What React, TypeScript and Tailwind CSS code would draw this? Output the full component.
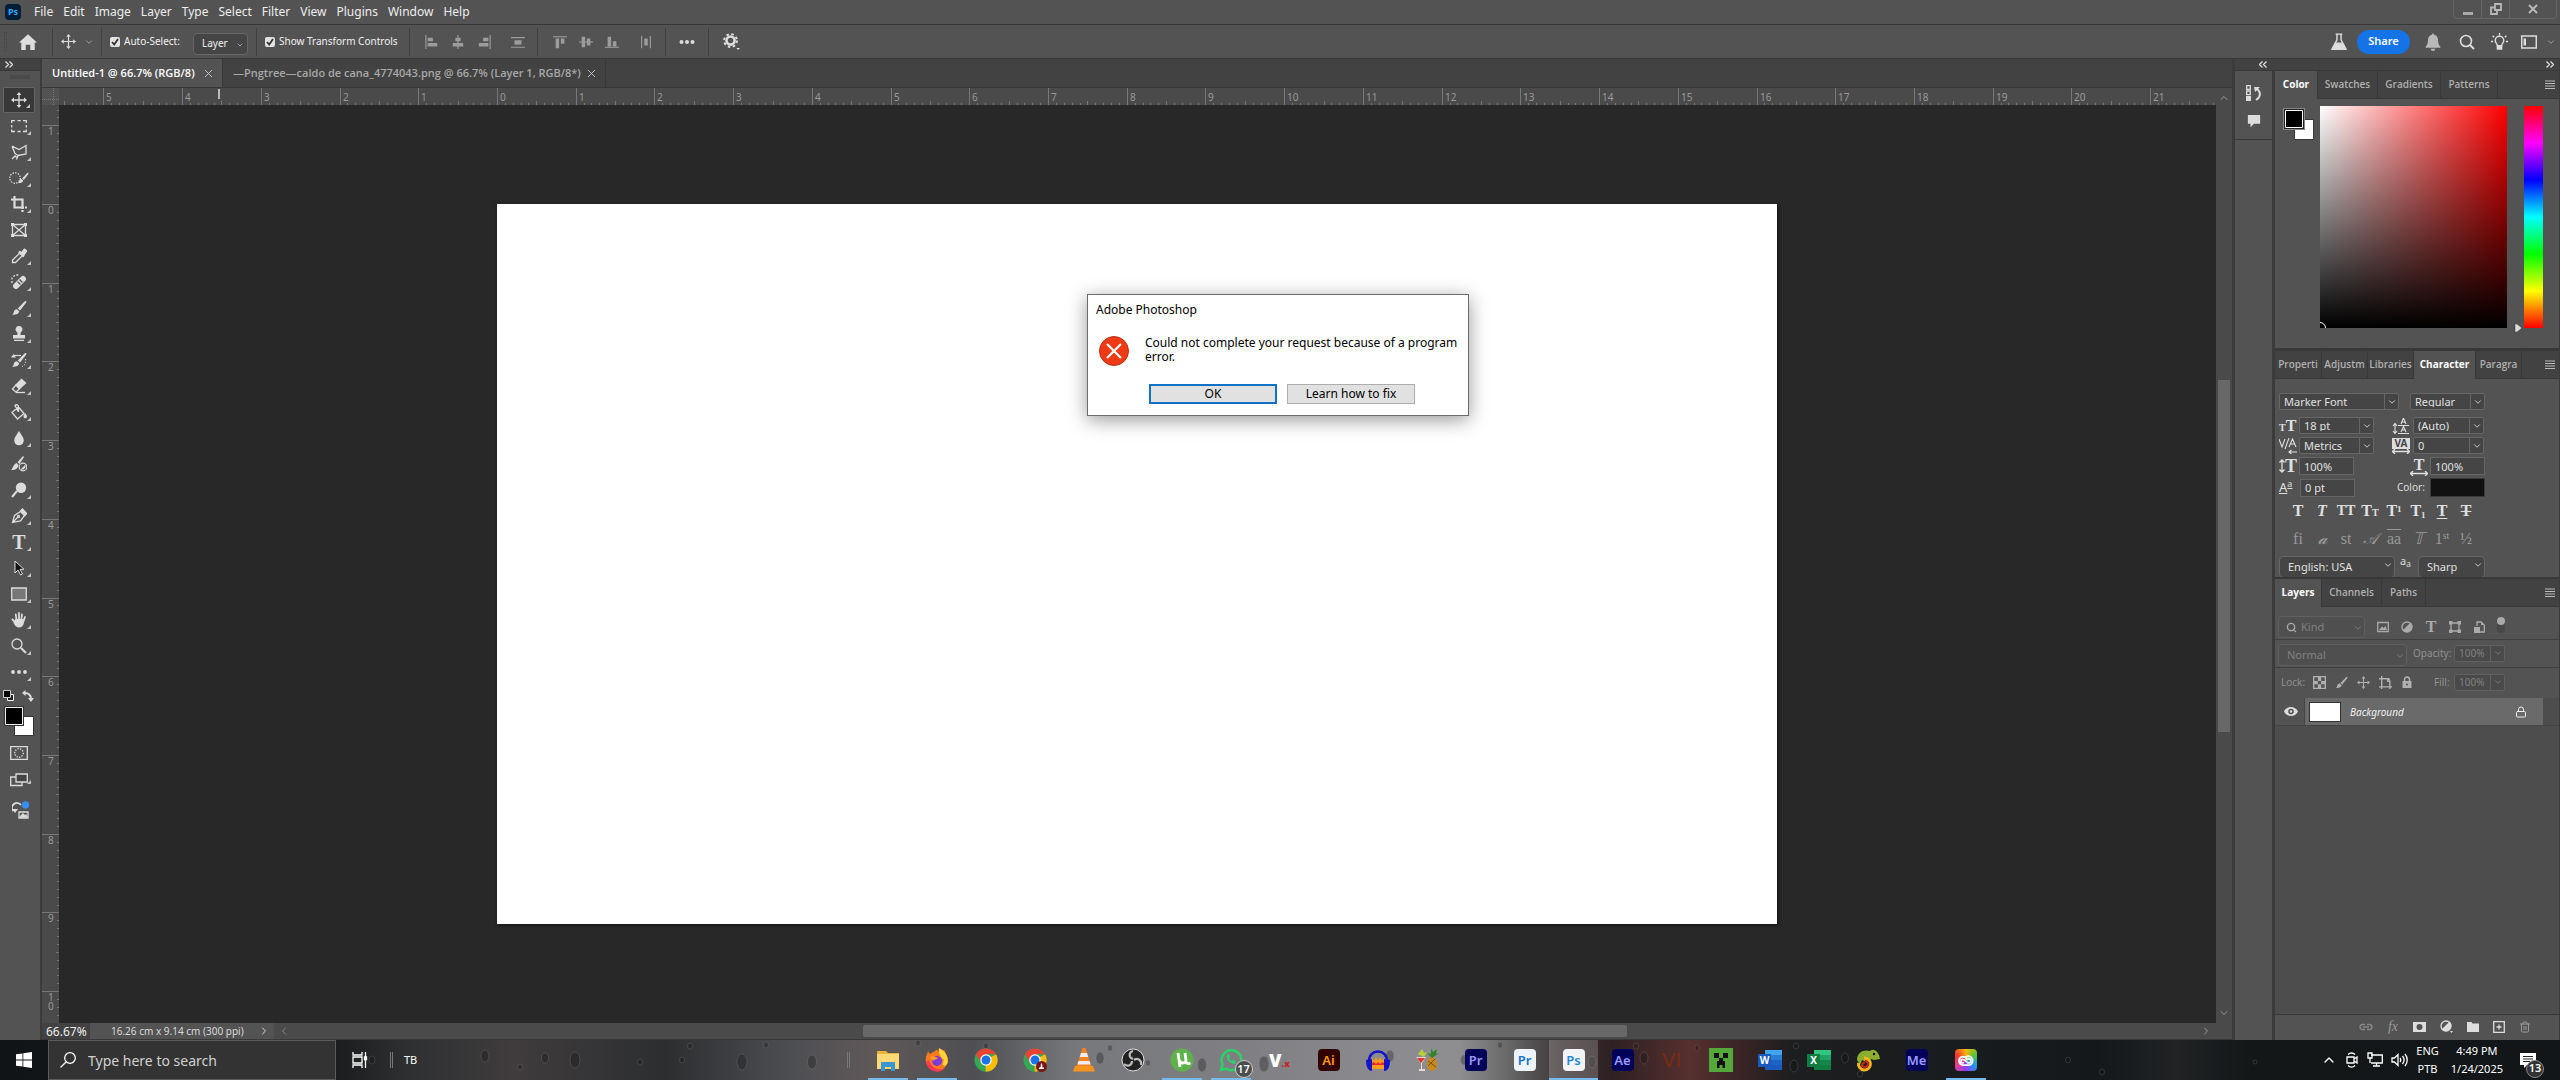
import React from 'react';
import { ChevronDown, ChevronUp, ChevronLeft, ChevronRight, Lock, Search, Trash2 } from 'lucide-react';

const CM = 1280 / 16.26;

type SvgProps = { children: React.ReactNode; className?: string; box?: string };

// outlined icon
const Line: React.FC<SvgProps> = ({ children, className = 'size-4', box = '0 0 16 16' }) => (
  <svg className={className} viewBox={box} fill="none" stroke="currentColor" strokeWidth="1.3" aria-hidden="true">
    {children}
  </svg>
);

// filled icon
const Solid: React.FC<SvgProps> = ({ children, className = 'size-4', box = '0 0 16 16' }) => (
  <svg className={className} viewBox={box} fill="currentColor" aria-hidden="true">
    {children}
  </svg>
);

const MoveIcon = ({ className = 'size-4' }: { className?: string }) => (
  <Line className={className}>
    <path d="M8 2v12M2 8h12" />
    <path d="M8 0l2.4 3H5.6zM8 16l2.4-3H5.6zM0 8l3-2.4v4.8zM16 8l-3-2.4v4.8z" fill="currentColor" stroke="none" />
  </Line>
);

const BrushShape = () => (
  <>
    <path d="M15 1c.6.4.4 1.200-.1 2L9 10.500 6.800 8.500 13 2c.7-.8 1.400-1.300 2-1z" />
    <path d="M6 9.200l2.200 2C8 13.800 5 15 1 14.700c1.800-1 1.600-2.200 2-3.500.4-1.300 1.600-2 3-2z" />
  </>
);

const TypeGlyph = ({ className = 'text-base' }: { className?: string }) => (
  <span className={`font-['Liberation_Serif',serif] leading-none font-bold ${className}`}>T</span>
);

const tools = [
  { name: 'Move', icon: <MoveIcon /> },
  { name: 'Rectangular Marquee', icon: <Line><path d="M.7 5V2.700H4M6.500 2.700h3.200M12 2.700h3.300V5M15.300 7v2.500M15.300 11.500v2H12M9.700 13.500H6.500M4 13.500H.7v-2M.7 9.500V7" /></Line> },
  { name: 'Polygonal Lasso', icon: <Line><path d="M1 2.200L8 5.500l7-4v8.500l-8 1.500M1 2.200l3 7.300M4 9.500l3 2c0 2.200-3 2-2.500 0M4.500 11.500L1 15M7 11.500l-1.500 4" /></Line> },
  { name: 'Quick Selection', icon: <><Line className="size-3"><circle cx="8" cy="8" r="7" strokeWidth="1.800" strokeDasharray="1.800 1.800" /></Line><Solid className="-ml-1 size-3"><BrushShape /></Solid></> },
  { name: 'Crop', icon: <Line><path d="M3.500 0v11.500H13M0 3.500h11.500V13M11.500 14v2M14 11.500h2" strokeWidth="2.200" /></Line> },
  { name: 'Frame', icon: <Line><path d="M1.500 2.500h13v11h-13zM1.500 2.500l13 11M14.500 2.500l-13 11" /><path d="M0 1h3v3H0zM13 1h3v3h-3zM0 12h3v3H0zM13 12h3v3h-3z" fill="currentColor" stroke="none" /></Line>, plain: true },
  { name: 'Eyedropper', icon: <Line><path d="M9 5l2.500 2.500-7 7H1.500V12z" /><path d="M8 3.500l5 5M10.500 5.500l3-3.500 1.500 1-2.500 3.500z" strokeWidth="2.500" fill="currentColor" /></Line> },
  { name: 'Spot Healing', icon: <Line><path d="M1 9V4l3-3h4" strokeDasharray="2 1.500" /><path d="M5 12L12 5" strokeWidth="6" strokeLinecap="round" /><path d="M6.500 7.500l3 3M8.500 5.500l3 3" stroke="#535353" /></Line> },
  { name: 'Brush', icon: <Solid><BrushShape /></Solid> },
  { name: 'Clone Stamp', icon: <Solid><path d="M8 0a3.300 3.300 0 0 1 2 6c-.7.8-.6 2-.3 3H14v3.500H2V9h4.300c.3-1 .4-2.200-.3-3a3.300 3.300 0 0 1 2-6zM3 13.700h10V15H3z" /></Solid> },
  { name: 'History Brush', icon: <Solid><BrushShape /><path d="M0 5.500L2.500 2 5 5.500z" /><path d="M3 3.500h7" stroke="currentColor" strokeWidth="1.200" /><path d="M14.500 7v5l-4 3" fill="none" stroke="currentColor" strokeDasharray="1.200 1.500" /></Solid> },
  { name: 'Eraser', icon: <Line><path d="M1.500 11l3.500 3.200 3.500-3.500L5 7z" /><path d="M5 7l5.500-5.500L14.500 5l-6 5.700z" fill="currentColor" /><path d="M5 14.500h9" /></Line> },
  { name: 'Paint Bucket', icon: <Line><path d="M1 8.500L7.500 3 13 9.500 6.500 15zM7.500 8L4 1.500C5.500 0 7.500 1 7.500 3v5" /><path d="M14.200 9c1 1.500 1.800 2.500 1.800 3.500 0 2.400-3.500 2.400-3.500 0 0-1 .8-2 1.700-3.500z" fill="currentColor" stroke="none" /></Line> },
  { name: 'Blur', icon: <Solid><path d="M8 1c2.500 4 4.800 6.500 4.800 9.500a4.800 4.800 0 0 1-9.600 0C3.200 7.500 5.500 5 8 1z" /></Solid> },
  { name: 'Mixer Brush', icon: <Solid><path d="M12 0l1 1-4.500 7-2-1.800zM5.500 7l2 2c-.5 4-3.500 5.500-7.500 5 2-1.500 2-5.500 5.500-7z" /><circle cx="12" cy="11" r="3.800" fill="none" stroke="currentColor" strokeWidth="1.200" /><path d="M9.500 13.500l5-5a4 4 0 0 1-5 5z" /></Solid>, plain: true },
  { name: 'Dodge', icon: <Solid><circle cx="10" cy="5.800" r="5.200" /><path d="M6 9L1 15" stroke="currentColor" strokeWidth="2" /></Solid> },
  { name: 'Pen', icon: <Line><path d="M1.500 14.500l2-7 6-4 4 4-4 5.500zM1.500 14.500L7 9" /><circle cx="7.500" cy="8.500" r="1" /><path d="M9.500 3l4.500 4.500 1.500-2L11.500 1z" fill="currentColor" /></Line> },
  { name: 'Type', icon: <TypeGlyph className="text-xl" /> },
  { name: 'Path Selection', icon: <svg className="size-4" viewBox="0 0 16 16" aria-hidden="true"><path d="M4 1v12l3-3 2.500 5 2-1L9 9.300h4z" fill="#111" stroke="#ddd" /></svg> },
  { name: 'Rectangle', icon: <Line><path d="M.7 2h14.600v12H.7z" fill="#777" /></Line> },
  { name: 'Hand', icon: <Solid><path d="M5.500 8L4.800 2.500M8 8V1M10.300 8l.6-5.500M12.500 9L14 5M5 11L1.500 7.500" stroke="currentColor" strokeWidth="1.800" strokeLinecap="round" /><path d="M4.500 7h8.800c0 4-1 8.500-5 8.500-3 0-4.500-2-6-5z" /></Solid> },
  { name: 'Zoom', icon: <Line><circle cx="6" cy="6" r="5" /><path d="M10 10l5 5" strokeWidth="2" /></Line> },
  { name: 'Edit Toolbar', icon: <Solid><circle cx="2" cy="8" r="1.900" /><circle cx="8" cy="8" r="1.900" /><circle cx="14" cy="8" r="1.900" /></Solid> },
];

const Corner = () => (
  <svg className="absolute right-1 bottom-1 size-1" viewBox="0 0 4 4" aria-hidden="true">
    <path d="M4 0v4H0z" fill="#c4c4c4" />
  </svg>
);

const Divider = () => <div className="h-7 w-px shrink-0 bg-[#404040]" />;

const menus = ['File', 'Edit', 'Image', 'Layer', 'Type', 'Select', 'Filter', 'View', 'Plugins', 'Window', 'Help'];

const MenuBar = () => (
  <header className="flex h-[25px] shrink-0 items-center border-b border-[#383838] bg-[#535353] pl-[5px]">
    <div className="mr-2 flex size-4 items-center justify-center rounded-sm bg-[#001e36] text-[9px] font-bold text-[#31a8ff]">Ps</div>
    <nav className="flex h-full">
      {menus.map((m) => (
        <button key={m} className="px-[5px] text-xs text-[#eee]">{m}</button>
      ))}
    </nav>
    <div className="mr-[3px] ml-auto flex h-[19px] self-start rounded-b-sm border border-t-0 border-[#656565] text-[#b8b8b8]">
      <button aria-label="Minimize" className="flex w-7 items-center justify-center border-r border-[#656565]">
        <span className="mt-2 h-[3px] w-[10px] bg-[#aaa]" />
      </button>
      <button aria-label="Restore" className="flex w-7 items-center justify-center border-r border-[#656565]">
        <Line className="size-3" box="0 0 12 12"><path d="M5 1h6v6H5zM5 4.500H1V11h6V7" strokeWidth="1.800" /></Line>
      </button>
      <button aria-label="Close" className="flex w-[46px] items-center justify-center">
        <Line className="size-[10px]" box="0 0 10 10"><path d="M1 1l8 8M9 1L1 9" strokeWidth="2" /></Line>
      </button>
    </div>
  </header>
);

const Check = ({ id, label, width }: { id: string; label: string; width: string }) => (
  <div className={`flex items-center gap-1 text-[10px] whitespace-nowrap text-[#f0f0f0] ${width}`}>
    <span className="relative flex">
      <input id={id} type="checkbox" defaultChecked className="size-[10px] appearance-none rounded-xs bg-[#e2e2e2]" />
      <Line className="pointer-events-none absolute inset-0 size-[10px] text-[#333]" box="0 0 10 10"><path d="M2 5l2.200 2.500L8 2" strokeWidth="1.800" /></Line>
    </span>
    <label htmlFor={id}>{label}</label>
  </div>
);

const alignIcons = [
  ['M1 0v16', 'M3 3h6v4H3zM3 9h11v4H3z'],
  ['M8 0v16', 'M5 3h6v4H5zM2 9h12v4H2z'],
  ['M15 0v16', 'M7 3h6v4H7zM2 9h11v4H2z'],
  ['M0 3h16M0 14h16', 'M4 6h8v5H4z'],
];
const alignIcons2 = [
  ['M0 2h16', 'M3 4h4v11H3zM9 4h4v6H9z'],
  ['M0 8h16', 'M3 2h4v12H3zM9 4h4v8H9z'],
  ['M0 14h16', 'M3 2h4v11H3zM9 7h4v6H9z'],
  ['M3 1v14M13 1v14', 'M6 4h4v8H6z'],
];

const AlignGroup = ({ items }: { items: string[][] }) => (
  <div className="flex items-center gap-3 text-[#9c9c9c]">
    {items.map(([l, f], i) => (
      <button key={l} aria-label="Align" className={i === 3 ? 'ml-2' : ''}>
        <Solid className="size-[14px]"><path d={f} /><path d={l} stroke="currentColor" strokeWidth="1.300" /></Solid>
      </button>
    ))}
  </div>
);

const OptionsBar = () => (
  <div className="flex h-[34px] shrink-0 items-center border-b border-[#383838] bg-[#535353] text-[#ddd]">
    <div className="ml-1 h-5 w-[3px] border-x border-dotted border-[#444]" />
    <button aria-label="Home" className="mr-[15px] ml-3">
      <Solid className="size-[18px]"><path d="M8 1l8 7.500h-2V15h-4v-4.500H6V15H2V8.500H0z" /></Solid>
    </button>
    <Divider />
    <button aria-label="Move tool" className="mr-[7px] ml-2 flex items-center gap-2"><MoveIcon className="size-[15px]" /><ChevronDown className="size-[10px] text-[#aaa]" /></button>
    <Divider />
    <div className="ml-2"><Check id="auto" label="Auto-Select:" width="w-[83px]" /></div>
    <div className="relative mt-1 mr-2 w-[55px] text-[10px]">
      <select aria-label="Auto-select target" className="h-[22px] w-full appearance-none rounded-sm border border-[#666] bg-[#454545] pl-2 text-[#f0f0f0]"><option>Layer</option></select>
      <ChevronDown className="pointer-events-none absolute top-2 right-1 size-2 text-[#ccc]" />
    </div>
    <Divider />
    <div className="ml-2"><Check id="transform" label="Show Transform Controls" width="w-36" /></div>
    <Divider />
    <div className="mr-3 ml-[15px]"><AlignGroup items={alignIcons} /></div>
    <Divider />
    <div className="mr-3 ml-[15px]"><AlignGroup items={alignIcons2} /></div>
    <Divider />
    <button aria-label="More options" className="mx-[13px]">
      <Solid className="size-4"><circle cx="2.500" cy="8" r="2" /><circle cx="8" cy="8" r="2" /><circle cx="13.500" cy="8" r="2" /></Solid>
    </button>
    <Divider />
    <button aria-label="Settings" className="ml-[14px]">
      <Line className="size-[17px]" box="0 0 18 18">
        <circle cx="8" cy="8" r="4.300" strokeWidth="2.800" />
        <circle cx="8" cy="8" r="6.800" strokeWidth="2" strokeDasharray="2.700 2.640" />
        <path d="M14 16h4l-2 2z" fill="currentColor" stroke="none" />
      </Line>
    </button>
    <div className="mr-1 ml-auto flex items-center">
      <button aria-label="Beta"><Line className="size-[18px]"><path d="M5 1h6M6.200 1v5L2 14h12L9.800 6V1" /><path d="M5 9h6l3 5.500H2z" fill="currentColor" /></Line></button>
      <button className="ml-[9px] h-6 w-[53px] rounded-full bg-[#1473e6] text-[11px] font-semibold text-white">Share</button>
      <button aria-label="Notifications" className="ml-[14px] text-[#b9b9b9]"><Solid className="size-[18px]"><path d="M7 1.500a1 1 0 0 1 2 0c2.500.5 3.500 2.500 3.500 5 0 3 .8 4.500 2 5.500v1h-13v-1c1.200-1 2-2.500 2-5.500 0-2.500 1-4.500 3.500-5zM6 14h4a2 2 0 0 1-4 0z" /></Solid></button>
      <button aria-label="Search" className="ml-[17px]"><Line><circle cx="7" cy="7" r="5.500" strokeWidth="1.600" /><path d="M11 11l4 4" strokeWidth="2" /></Line></button>
      <button aria-label="Discover" className="ml-4"><Line className="size-[17px]"><path d="M6 12c0-2-2-2.500-2-5a4 4 0 0 1 8 0c0 2.500-2 3-2 5zM8 0v2M1.500 2.500L3 4M14.500 2.500L13 4M0 8h2M14 8h2" /><path d="M6 12h4v3H6z" fill="currentColor" /></Line></button>
      <button aria-label="Workspace" className="ml-[13px] flex items-center gap-[9px]">
        <Line><path d="M.7 2h14.600v12H.7z" strokeWidth="1.500" /><path d="M2.500 4.500H5v7H2.500z" fill="currentColor" stroke="none" /></Line>
        <ChevronDown className="size-[10px] text-[#aaa]" />
      </button>
    </div>
  </div>
);

const DoubleArrow = ({ left }: { left?: boolean }) => (
  <Line className="h-[7px] w-2 text-[#ddd]" box="0 0 8 7"><path d={left ? 'M3.500.5l-3 3 3 3M7.500.5l-3 3 3 3' : 'M.5.5l3 3-3 3M4.500.5l3 3-3 3'} /></Line>
);

const Toolbar = () => (
  <aside className="flex w-[42px] shrink-0 flex-col border-r-2 border-[#3b3b3b] bg-[#535353] text-[#dcdcdc]">
    <div className="flex h-3 shrink-0 items-center border-b border-[#383838] bg-[#424242] pl-[5px]"><DoubleArrow /></div>
    <div className="mx-[10px] mt-1 mb-2 h-1 shrink-0 border-x border-dotted border-[#444] bg-[#4a4a4a]" />
    <div className="flex flex-col pl-[3px]">
      {tools.map((t, i) => (
        <button
          key={t.name}
          aria-label={t.name}
          className={`relative flex h-[26px] w-8 items-center justify-center rounded-xs ${i === 0 ? 'border border-[#666] bg-[#383838]' : ''}`}
        >
          {t.icon}
          {!t.plain && <Corner />}
        </button>
      ))}
    </div>
    <div className="mt-[5px] ml-[3px] flex h-3 items-center justify-between pr-[6px]">
      <svg className="size-3" viewBox="0 0 12 12" aria-hidden="true"><path d="M4.500 4.500h6v6h-6z" fill="#222" stroke="#fff" /><path d="M.5.5h7v7h-7z" fill="#000" stroke="#ccc" /></svg>
      <Line className="size-3" box="0 0 12 12"><path d="M2 3c4-.5 7 2 7 6" strokeWidth="2" /><path d="M3.500 0v6L0 3zM6 8h6l-3 4z" fill="currentColor" stroke="none" /></Line>
    </div>
    <svg className="mt-1 ml-1 size-[30px] shrink-0" viewBox="0 0 30 30" aria-hidden="true">
      <path d="M10.500 10.500h19v19h-19z" fill="#fff" stroke="#333" /><path d="M1 1h18v18H1z" fill="#000" stroke="#333" strokeWidth="2" /><path d="M1.500 1.500h17v17h-17z" fill="#000" stroke="#eee" />
    </svg>
    <button aria-label="Quick Mask" className="mt-[10px] ml-[10px]"><Line className="h-[14px] w-[18px]" box="0 0 18 14"><path d="M.7.7h16.600v12.600H.7z" /><circle cx="9" cy="7" r="4.300" strokeDasharray="1.300 1.300" /></Line></button>
    <button aria-label="Screen Mode" className="relative mt-3 ml-[3px] flex h-4 w-8 items-center justify-center"><Line className="h-[14px] w-[18px]" box="0 0 18 14"><path d="M6 4H.7v8.500H12V9" /><path d="M6 1h11.300v8H6z" fill="#444" /></Line><Corner /></button>
    <button aria-label="Cloud" className="mt-[13px] ml-3"><Line className="h-[18px] w-[17px]" box="0 0 17 18"><path d="M1 10a5 5 0 0 1 8-6" strokeWidth="1.800" /><path d="M0 8h6l-3 4z" fill="currentColor" stroke="none" /><path d="M7 11h9v6H7z" /><path d="M8 16l3-3 2 2 1-1 1 2z" fill="currentColor" /><circle cx="13.500" cy="4" r="3.700" fill="#378ef0" stroke="none" /></Line></button>
  </aside>
);

const HorizontalRuler = () => {
  const origin = 438;
  const minor = Array.from({ length: 290 }, (_, i) => origin + (i - 55) * (CM / 10));
  const major = Array.from({ length: 27 }, (_, i) => i - 5);
  return (
    <svg className="h-[17px] w-full text-[10px]" aria-label="Horizontal ruler">
      {minor.map((x, i) => <path key={i} d={`M${Math.round(x) + 0.5} ${i % 5 === 0 ? 13 : 15}V17`} stroke="#777" />)}
      {major.map((n) => (
        <g key={n}>
          <path d={`M${Math.round(origin + n * CM) + 0.5} 0V17`} stroke="#777" />
          <text x={Math.round(origin + n * CM) + 3} y="13" fill="#999">{Math.abs(n)}</text>
        </g>
      ))}
      <path d="M160 1V11" stroke="#bbb" strokeWidth="2" />
    </svg>
  );
};

const VerticalRuler = () => {
  const origin = 99;
  const minor = Array.from({ length: 117 }, (_, i) => origin + (i - 12) * (CM / 10));
  const major = Array.from({ length: 12 }, (_, i) => i - 1);
  return (
    <svg className="h-full w-[17px] shrink-0 bg-[#4a4a4a] text-[10px]" aria-label="Vertical ruler">
      {minor.map((y, i) => <path key={i} d={`M${(i + 3) % 5 === 0 ? 14 : 15} ${Math.round(y) + 0.5}H17`} stroke="#777" />)}
      {major.map((n) => {
        const y = Math.round(origin + n * CM);
        return (
          <g key={n} fill="#999">
            <path d={`M0 ${y + 0.5}H17`} stroke="#777" />
            {String(Math.abs(n)).split('').map((d, i) => <text key={i} x="6" y={y + 10 + i * 9}>{d}</text>)}
          </g>
        );
      })}
    </svg>
  );
};

const CloseTab = () => (
  <button aria-label="Close tab"><Line className="size-[7px] text-[#ccc]" box="0 0 8 8"><path d="M0 0l8 8M8 0L0 8" strokeWidth="1" /></Line></button>
);

const Workspace = () => (
  <main className="flex min-w-0 flex-1 flex-col">
    <div className="flex h-[29px] shrink-0 border-b border-[#383838] bg-[#424242] font-['Open_Sans',sans-serif] text-[11px] font-semibold">
      <div className="flex w-[181px] items-center justify-between border-r border-[#383838] bg-[#535353] pr-[10px] pl-[10px] whitespace-nowrap text-white">
        Untitled-1 @ 66.7% (RGB/8)
        <CloseTab />
      </div>
      <div className="flex w-[383px] items-center justify-between border-r border-[#383838] pr-[10px] pl-[10px] whitespace-nowrap text-[#a8a8a8]">
        —Pngtree—caldo de cana_4774043.png @ 66.7% (Layer 1, RGB/8*)
        <CloseTab />
      </div>
    </div>
    <div className="flex min-h-0 flex-1">
      <div className="flex min-w-0 flex-1 flex-col">
        <div className="flex h-[17px] shrink-0 bg-[#4a4a4a]">
          <div className="relative w-[17px] shrink-0 bg-[#535353]">
            <div className="absolute right-[5px] h-full border-r border-dotted border-[#777]" />
            <div className="absolute bottom-[5px] w-full border-b border-dotted border-[#777]" />
          </div>
          <HorizontalRuler />
        </div>
        <div className="flex min-h-0 flex-1">
          <VerticalRuler />
          <div className="flex flex-1 items-center justify-center bg-[#282828] pr-px">
            <div className="h-[720px] w-[1280px] bg-white shadow-[1px_1px_3px_#111]" />
          </div>
        </div>
      </div>
      <div className="flex w-4 shrink-0 flex-col items-center bg-[#4a4a4a] py-1">
        <ChevronUp className="size-3 text-[#999]" />
        <div className="flex-[276]" />
        <div className="w-3 flex-[351] bg-[#686868]" />
        <div className="flex-[275]" />
        <ChevronDown className="size-3 text-[#999]" />
      </div>
    </div>
    <div className="flex h-[17px] shrink-0 items-center border-b border-[#383838] bg-[#4a4a4a]">
      <input aria-label="Zoom" defaultValue="66.67%" className="h-full w-12 bg-[#424242] pl-1 text-xs text-[#eee]" />
      <div className="flex h-full w-[184px] items-center justify-between bg-[#535353] pr-1 pl-[21px] text-[10px] whitespace-nowrap text-[#d8d8d8]">
        16.26 cm x 9.14 cm (300 ppi)
        <ChevronRight className="size-3" />
      </div>
      <ChevronLeft className="ml-1 size-3 text-[#888]" />
      <div className="flex flex-1">
        <div className="flex-[573]" />
        <div className="h-3 flex-[763] rounded-xs bg-[#686868]" />
        <div className="flex-[573]" />
      </div>
      <ChevronRight className="mr-5 size-3 text-[#999]" />
    </div>
  </main>
);

type TabsProps = { items: [string, string][]; active: string };

const PanelTabs: React.FC<TabsProps> = ({ items, active }) => (
  <div className="flex h-7 shrink-0 bg-[#424242] font-['Open_Sans',sans-serif] text-[10px]">
    {items.map(([name, width]) => (
      <button
        key={name}
        className={`${width} overflow-hidden border-r border-[#383838] pb-px text-center whitespace-nowrap ${name === active ? 'bg-[#535353] font-bold text-white' : 'border-b font-semibold text-[#b0b0b0]'}`}
      >
        {name}
      </button>
    ))}
    <div className="flex flex-1 items-center justify-end border-b border-[#383838] pr-1">
      <button aria-label="Panel menu"><Line className="h-[9px] w-[10px] text-[#bbb]" box="0 0 10 9"><path d="M0 1h10M0 3.500h10M0 6h10M0 8.500h10" strokeWidth="1" /></Line></button>
    </div>
  </div>
);

const ColorPanel = () => (
  <section className="flex h-[280px] shrink-0 flex-col border-b-[3px] border-[#383838]">
    <PanelTabs active="Color" items={[['Color', 'w-[43px]'], ['Swatches', 'w-[60px]'], ['Gradients', 'w-[63px]'], ['Patterns', 'w-[57px]']]} />
    <div className="flex pt-[7px] pr-4 pl-2">
      <svg className="mt-[2px] mr-[6px] h-8 w-[31px] shrink-0" viewBox="0 0 31 32" aria-label="Foreground and background colors">
        <path d="M11.500 11.500h19v20h-19z" fill="#fff" stroke="#383838" />
        <path d="M0 0h22v22H0z" fill="#888" /><path d="M1 1h20v20H1z" fill="#222" /><path d="M2.500 2.500h17v17h-17z" fill="#000" stroke="#fff" />
      </svg>
      <div className="relative h-[222px] flex-1 overflow-hidden bg-[linear-gradient(to_top,#000,transparent),linear-gradient(to_right,#fff,#f00)]">
        <div className="absolute -bottom-[6px] -left-[6px] size-3 rounded-full border border-white" />
      </div>
      <div className="flex w-[17px] items-end justify-end pr-[2px]">
        <svg className="-mb-1 size-2" viewBox="0 0 8 8" aria-hidden="true"><path d="M1 0h2l5 4-5 4H1z" fill="#ddd" stroke="#333" strokeWidth=".5" /></svg>
      </div>
      <div className="w-[19px] bg-[linear-gradient(#f00,#f0f,#00f,#0ff,#0f0,#ff0,#f00)]" />
    </div>
  </section>
);

type FieldProps = { label: string; value: string; width: string; box?: string; dim?: boolean };

const SplitSelect: React.FC<FieldProps> = ({ label, value, width, dim }) => (
  <div className={`relative flex h-[17px] ${width} ${dim ? 'text-[#808080]' : 'text-[#e0e0e0]'}`}>
    <select aria-label={label} className={`size-full appearance-none rounded-xs border pl-1 leading-none ${dim ? 'border-[#606060] bg-[#4a4a4a] text-[10px]' : 'border-[#666] bg-[#454545] text-[11px]'}`}>
      <option>{value}</option>
    </select>
    <div className={`pointer-events-none absolute inset-y-0 right-0 flex w-[15px] items-center justify-center border-l ${dim ? 'border-[#606060]' : 'border-[#666]'}`}>
      <ChevronDown className="size-[10px]" />
    </div>
  </div>
);

const PlainSelect: React.FC<FieldProps> = ({ label, value, width, dim, box = 'pl-2' }) => (
  <div className={`relative h-[22px] ${width} ${dim ? 'text-[#808080]' : 'text-[#e0e0e0]'}`}>
    <select aria-label={label} className={`size-full appearance-none rounded-sm border text-[11px] ${box} ${dim ? 'border-[#606060] bg-[#4f4f4f]' : 'border-[#666] bg-[#454545]'}`}>
      <option>{value}</option>
    </select>
    <ChevronDown className="pointer-events-none absolute top-[7px] right-[2px] size-[10px]" />
  </div>
);

const TextField = ({ label, value }: { label: string; value: string }) => (
  <input aria-label={label} defaultValue={value} className="h-[18px] w-[55px] border border-[#666] bg-[#454545] pl-1 text-[11px] text-[#e0e0e0]" />
);

const serif = "font-['Liberation_Serif',serif]";

const CharacterPanel = () => (
  <section className="flex h-[226px] shrink-0 flex-col overflow-hidden">
    <PanelTabs active="Character" items={[['Properti', 'w-[47px]'], ['Adjustm', 'w-[46px]'], ['Libraries', 'w-[46px]'], ['Character', 'w-[62px]'], ['Paragra', 'w-[46px]']]} />
    <div className="flex flex-col gap-[3px] pt-[14px] pl-1 text-[#e0e0e0]">
      <div className="mb-1 flex h-[17px] gap-[11px]">
        <SplitSelect label="Font" value="Marker Font" width="w-[120px]" />
        <SplitSelect label="Style" value="Regular" width="w-[75px]" />
      </div>
      <div className="flex h-[17px] items-center">
        <span className={`w-5 leading-4 ${serif}`}><span className="text-[10px] font-bold">T</span><span className="text-base font-bold">T</span></span>
        <SplitSelect label="Size" value="18 pt" width="w-[75px]" />
        <Line className="mr-[2px] ml-[18px] h-4 w-[19px]" box="0 0 19 16"><path d="M3 6v9M1 8l2-2.500L5 8M1 13l2 2.500L5 13M6 7.500h11M6 15.500h11M9 6l2.500-6L14 6M9.500 4h4M9 14l2.500-5.500L14 14M9.500 12h4" strokeWidth="1.100" /></Line>
        <SplitSelect label="Leading" value="(Auto)" width="w-[71px]" />
      </div>
      <div className="flex h-[17px] items-center">
        <Line className="mr-[2px] h-4 w-[18px]" box="0 0 18 16"><path d="M0 1l3 8 3-8M6 11L10 0M10 9l3.500-8L17 9M11 6h5M10 14h8M12.500 12L10 14l2.500 2" strokeWidth="1.100" /></Line>
        <SplitSelect label="Kerning" value="Metrics" width="w-[75px]" />
        <span className="mr-[3px] ml-[18px] flex w-[18px] flex-col items-center">
          <span className="w-full bg-[#ddd] text-center text-[10px] leading-[11px] font-bold text-[#444]">VA</span>
          <Line className="h-[5px] w-[18px]" box="0 0 18 5"><path d="M0 2.500h18M3 0L.5 2.500 3 5M15 0l2.500 2.500L15 5" /></Line>
        </span>
        <SplitSelect label="Tracking" value="0" width="w-[71px]" />
      </div>
      <div className="flex h-[18px] items-center">
        <span className="flex w-5 items-center"><Line className="h-[14px] w-[6px]" box="0 0 6 14"><path d="M3 1v12M.5 3.500L3 1l2.500 2.500M.5 10.500L3 13l2.500-2.500" /></Line><TypeGlyph className="text-lg" /></span>
        <TextField label="Vertical scale" value="100%" />
        <span className="mr-[2px] ml-[56px] flex w-[18px] flex-col items-center">
          <TypeGlyph />
          <Line className="-mt-[2px] h-[5px] w-[18px]" box="0 0 18 5"><path d="M0 2.500h18M3 0L.5 2.500 3 5M15 0l2.500 2.500L15 5" /></Line>
        </span>
        <TextField label="Horizontal scale" value="100%" />
      </div>
      <div className="flex h-[19px] items-center text-[10px]">
        <span className="flex w-[21px] items-center"><span className="text-[13px] leading-none underline">A</span><sup className="text-[9px] leading-none underline">a</sup></span>
        <TextField label="Baseline shift" value="0 pt" />
        <label htmlFor="fill" className="ml-[42px] w-[33px] text-[#ddd]">Color:</label>
        <button id="fill" aria-label="Text color" className="h-[19px] w-[55px] border border-[#3a3a3a] bg-[#111]" />
      </div>
    </div>
    <div className={`mt-1 flex h-5 shrink-0 pl-[11px] text-base leading-5 font-bold text-[#e0e0e0] ${serif}`}>
      <button className="w-6">T</button>
      <button className="w-6 italic">T</button>
      <button className="w-6 text-sm">TT</button>
      <button className="w-6">T<span className="text-[10px]">T</span></button>
      <button className="w-6">T<sup className="text-[9px]">1</sup></button>
      <button className="w-6">T<sub className="text-[9px]">1</sub></button>
      <button className="w-6 underline underline-offset-2">T</button>
      <button className="w-6 line-through">T</button>
    </div>
    <div className={`mt-2 flex h-5 shrink-0 pl-[11px] text-base leading-5 text-[#999] ${serif}`}>
      <button className="w-6">fi</button>
      <button className="w-6 italic">&#x1d4ea;</button>
      <button className="w-6">st</button>
      <button className="w-6 italic">𝒜</button>
      <button className="w-6 overline">aa</button>
      <button className="w-6 italic">𝕋</button>
      <button className="w-6">1<sup className="text-[10px]">st</sup></button>
      <button className="w-6">½</button>
    </div>
    <div className="mt-1 flex shrink-0 pl-1">
      <PlainSelect label="Language" value="English: USA" width="w-[116px]" />
      <span className="w-[23px] pl-[5px] text-[11px] leading-4 text-[#ddd]">a<sub>a</sub></span>
      <PlainSelect label="Anti-aliasing" value="Sharp" width="w-[67px]" />
    </div>
  </section>
);

const LayersPanel = () => (
  <section className="flex min-h-0 flex-1 flex-col border-t-2 border-[#383838] text-[11px]">
    <PanelTabs active="Layers" items={[['Layers', 'w-[47px]'], ['Channels', 'w-[60px]'], ['Paths', 'w-[44px]']]} />
    <div className="flex h-[33px] shrink-0 items-end border-b border-[#404040] pb-px pl-[3px] text-[#aaa]">
      <div className="relative">
        <PlainSelect dim label="Filter kind" value="Kind" width="w-[87px]" box="pl-[22px]" />
        <Search className="pointer-events-none absolute top-[6px] left-2 size-[11px]" strokeWidth={3} />
      </div>
      <div className="ml-3 flex h-[22px] items-center gap-3">
        <Line className="size-3" box="0 0 12 12"><path d="M.7 1.500h10.600v9H.7z" /><path d="M2 9l3-3.500 1.500 1.500L8.500 5 10 9z" fill="currentColor" stroke="none" /></Line>
        <Line className="size-3" box="0 0 12 12"><circle cx="6" cy="6" r="5" /><path d="M2.500 9.500l7-7a5 5 0 0 1-7 7z" fill="currentColor" /></Line>
        <span className="flex w-3 justify-center"><TypeGlyph /></span>
        <Line className="size-3" box="0 0 12 12"><path d="M2 2h8v8H2z" /><path d="M0 0h3.500v3.500H0zM8.500 0H12v3.500H8.500zM0 8.500h3.500V12H0zM8.500 8.500H12V12H8.500z" fill="currentColor" stroke="none" /></Line>
        <Line className="size-3" box="0 0 12 12"><path d="M4 5V1h4l3.300 3v7H6" /><path d="M1 6h6v6H1zM8 1v3h3z" fill="currentColor" stroke="none" /></Line>
        <button aria-label="Toggle filter" className="-mt-1 flex h-4 w-2 rounded-full bg-[#484848]"><span className="size-2 rounded-full bg-[#aaa]" /></button>
      </div>
    </div>
    <div className="flex h-7 shrink-0 items-end border-b border-[#404040] pb-px pl-[3px] text-[10px] text-[#909090]">
      <PlainSelect dim label="Blend mode" value="Normal" width="w-[129px]" />
      <span className="w-[47px] self-center pl-[6px]">Opacity:</span>
      <div className="self-center"><SplitSelect dim label="Opacity" value="100%" width="w-[51px]" /></div>
    </div>
    <div className="flex h-[30px] shrink-0 items-center pb-[2px] pl-[6px] text-[10px] text-[#909090]">
      <span className="w-8">Lock:</span>
      <div className="flex items-center gap-[9px] text-[#b0b0b0]">
        <Line className="size-[13px]" box="0 0 12 12"><path d="M.6.600h10.800v10.800H.6z" /><path d="M4.500 1h3v3.500h-3zM1 4.500h3.500v3H1zM7.500 4.500H11v3H7.500zM4.500 7.500h3V11h-3z" fill="currentColor" stroke="none" /></Line>
        <Solid className="size-[13px]"><BrushShape /></Solid>
        <MoveIcon className="size-[13px]" />
        <Line className="size-[13px]" box="0 0 12 12"><path d="M2.500 0v12M0 2.500h9l1 2v5.500H0M10 10v2M12 10h-2M8 2.500V5h2.500" /></Line>
        <Solid className="size-3" box="0 0 12 12"><path d="M1.500 5h9v7h-9z" /><path d="M3.500 5V3.500a2.500 2.500 0 0 1 5 0V5" fill="none" stroke="currentColor" strokeWidth="1.500" /><circle cx="6" cy="8.500" r="1" fill="#535353" /></Solid>
      </div>
      <span className="ml-[21px] w-5">Fill:</span>
      <SplitSelect dim label="Fill" value="100%" width="w-[51px]" />
    </div>
    <div className="flex min-h-0 flex-1 flex-col border-b border-[#383838] bg-[#4d4d4d]">
      <div className="flex h-7 items-stretch border-b border-[#444] pr-4">
        <button aria-label="Toggle visibility" className="flex w-[30px] items-center justify-center border-r border-[#444] bg-[#535353] pl-[2px] text-[#ddd]">
          <Solid className="h-[9px] w-[14px]" box="0 0 14 9"><path d="M0 4.500C3-1.500 11-1.500 14 4.500 11 10.500 3 10.500 0 4.500z" /><circle cx="7" cy="4.500" r="2.800" fill="#535353" /><circle cx="7" cy="4.500" r="1.200" /></Solid>
        </button>
        <div className="flex flex-1 items-center bg-[#6a6a6a] pr-4 pl-1 text-[#f0f0f0]">
          <div className="h-5 w-8 border border-[#333] bg-white" />
          <span className="ml-[9px] flex-1 pt-px text-[10px] italic">Background</span>
          <Lock className="size-3" />
        </div>
      </div>
    </div>
    <div className="flex h-[25px] shrink-0 items-center justify-end gap-[14px] pr-7 pb-[2px] text-[#ddd]">
      <button aria-label="Link" className="text-[#888]"><Line className="h-3 w-[14px]" box="0 0 14 12"><path d="M6 3.500H3.500a2.500 2.500 0 0 0 0 5H6M8 3.500h2.500a2.500 2.500 0 0 1 0 5H8M4 6h6" /></Line></button>
      <button className={`w-3 text-sm leading-none text-[#999] italic ${serif}`}>fx</button>
      <button aria-label="Add mask"><Solid className="h-3 w-[13px]" box="0 0 13 12"><path d="M0 1h13v10H0z" /><circle cx="6.500" cy="6" r="3" fill="#535353" /></Solid></button>
      <button aria-label="Adjustment"><Line className="size-[13px]" box="0 0 13 13"><circle cx="6" cy="6" r="5" /><path d="M2.500 9.500l7-7a5 5 0 0 1-7 7z" fill="currentColor" /><path d="M10 11h3l-1.500 2z" fill="currentColor" stroke="none" /></Line></button>
      <button aria-label="New group"><Solid className="size-3" box="0 0 12 12"><path d="M0 1h4.500l1 1.500H12V11H0z" /></Solid></button>
      <button aria-label="New layer"><Line className="size-3" box="0 0 12 12"><path d="M.7.700h10.600v10.600H.7zM6 3.500v5M3.500 6h5" /></Line></button>
      <button aria-label="Delete" className="text-[#999]"><Trash2 className="size-3" /></button>
    </div>
  </section>
);

const RightDock = () => (
  <aside className="flex w-[328px] shrink-0 flex-col border-r border-l-[3px] border-[#3b3b3b] bg-[#535353]">
    <div className="flex h-3 shrink-0 items-center border-b border-[#383838] bg-[#424242] pr-[5px] pl-6">
      <DoubleArrow left />
      <div className="flex-1" />
      <DoubleArrow />
    </div>
    <div className="flex min-h-0 flex-1">
      <div className="flex w-[40px] shrink-0 flex-col border-r-[3px] border-[#3b3b3b] text-[#ddd]">
        <div className="flex h-[69px] flex-col items-center gap-[13px] border-b border-[#383838] pt-[14px]">
          <button aria-label="History"><Line><path d="M.7.700h3.600v3.600H.7zM.7 6h3.600v3.600H.7z" /><path d="M0 11h5v5H0zM8 2h6L9 7z" fill="currentColor" stroke="none" /><path d="M11 4c4 3 4 8-1 11" strokeWidth="2" /></Line></button>
          <button aria-label="Comments"><Solid className="size-[14px]"><path d="M1 1h14v10H8l-4 4v-4H1z" /></Solid></button>
        </div>
      </div>
      <div className="flex min-w-0 flex-1 flex-col">
        <ColorPanel />
        <CharacterPanel />
        <LayersPanel />
      </div>
    </div>
  </aside>
);

const ErrorDialog = () => (
  <div role="dialog" aria-labelledby="dlg" className="absolute top-[294px] left-[1087px] w-[382px] border border-[#6b6b6b] bg-white pb-[11px] text-xs text-black shadow-[0_4px_18px_rgba(0,0,0,0.4)]">
    <h2 id="dlg" className="px-2 pt-[6px] leading-[18px]">Adobe Photoshop</h2>
    <div className="flex gap-4 pt-[17px] pl-[11px]">
      <svg className="size-[30px] shrink-0" viewBox="0 0 30 30" aria-hidden="true">
        <circle cx="15" cy="15" r="14.500" fill="#ee3a15" stroke="#b5301a" /><path d="M8 8l14 14M22 8L8 22" stroke="#fff" strokeWidth="2.200" />
      </svg>
      <p className="leading-[14px]">Could not complete your request because of a program error.</p>
    </div>
    <div className="mt-[18px] flex gap-[10px] pl-[61px]">
      <button className="h-5 w-32 border-2 border-[#1072c4] bg-[#e1e1e1] leading-none">OK</button>
      <button className="h-5 w-32 border border-[#adadad] bg-[#e1e1e1] leading-none">Learn how to fix</button>
    </div>
  </div>
);

const AppTile = ({ text, className }: { text: string; className: string }) => (
  <span className={`flex size-[22px] items-center justify-center rounded-sm text-[13px] leading-none font-semibold ${className}`}>{text}</span>
);

const Art: React.FC<{ children: React.ReactNode }> = ({ children }) => (
  <svg className="size-6" viewBox="0 0 24 24" aria-hidden="true">{children}</svg>
);

const Chrome = () => (
  <>
    <circle cx="12" cy="12" r="11.500" fill="#34a853" />
    <path d="M12 12L22 6.200A11.500 11.500 0 0 1 11.500 23.500z" fill="#fbbc05" />
    <path d="M12 6.300h10A11.500 11.500 0 0 0 2 6.200l5 8.600z" fill="#ea4335" />
    <circle cx="12" cy="12" r="5.800" fill="#fff" /><circle cx="12" cy="12" r="4.500" fill="#1a73e8" />
  </>
);

const Office = ({ letter, dark, mid, light, top }: { letter: string; dark: string; mid: string; light: string; top: string }) => (
  <Art>
    <path d="M7 2h17v5H7z" fill={top} /><path d="M7 7h17v5H7z" fill={light} /><path d="M7 12h17v5H7z" fill={mid} /><path d="M7 17h17v5H7z" fill={dark} />
    <path d="M0 6h13v13H0z" fill={dark} />
    <text x="6.500" y="16" fontSize="10" fontWeight="700" fill="#fff" textAnchor="middle">{letter}</text>
  </Art>
);

const apps: { name: string; icon: React.ReactNode; open?: boolean; active?: boolean }[] = [
  { name: 'File Explorer', open: true, icon: <Art><path d="M1 3h9l2 2h11v16H1z" fill="#e8b33c" /><path d="M1 6h22v15H1z" fill="#fcd975" /><path d="M5 23v-9h14v9h-4v-4H9v4z" fill="#3a96d0" /></Art> },
  { name: 'Firefox', open: true, icon: <Art><path d="M12 1.500c1.500 2 2 3 5 4L19 1c1 4 4.500 7 4 12.500A11.300 11.300 0 0 1 .7 13C.500 8.500 2 6.500 3 3.500L5 6z" fill="#ff7a1f" /><path d="M1 14a11.300 11.300 0 0 0 19 6.500C13 23 6 20 4 12z" fill="#ff3b52" /><path d="M14 0c5 2 10 8 8.500 15C20 20 16 18 19 12c-3-3-6-6-5-12z" fill="#ffd43a" /><circle cx="12" cy="13" r="5" fill="#7c3bd6" /><path d="M5 9c4-2 5 0 8 1-1 2-4 1-5 3z" fill="#ff9a2a" /></Art> },
  { name: 'Chrome', icon: <Art><Chrome /></Art> },
  { name: 'Chrome profile', icon: <Art><Chrome /><circle cx="18.500" cy="18.500" r="5.500" fill="#7a1515" /><path d="M16 21h5v-1.500h-1.500l-.5-4h-1l-.5 4H16z" fill="#fff" /></Art> },
  { name: 'VLC', icon: <Art><path d="M10.500 0h3L20 20H4z" fill="#f58220" /><path d="M9 5h6l1.200 4H7.800zM6.500 13h11l1 3.500h-13z" fill="#eee" /><path d="M3 18h18l2 5.500H1z" fill="#f7941d" /></Art> },
  { name: 'OBS', icon: <Art><circle cx="12" cy="12" r="11" fill="#222" stroke="#ddd" /><path d="M12 11C7 9 8 4 12 3M13 12c4-3 8 1 7 5M11 13c0 5-5 6-8 3" fill="none" stroke="#bbb" strokeWidth="2.200" /></Art> },
  { name: 'uTorrent', open: true, icon: <Art><circle cx="12" cy="12" r="11.500" fill="#5fb24a" /><path d="M8 5l2 14M9 12c1.500 4 7 4 7 0L15 5l1 8c.5 3 2 3 4.500 2" fill="none" stroke="#fff" strokeWidth="2.800" /></Art> },
  { name: 'WhatsApp', open: true, icon: <span className="relative"><Art><path d="M2 22l1.500-5.500A10 10 0 1 1 7 20.500z" fill="none" stroke="#2bd367" strokeWidth="2.500" /><path d="M8 7c-2 3 3 9 8 9l1-3-3-1-1 1c-1 0-3-2-3-3l1-1-1-3z" fill="#2bd367" /></Art><span className="absolute top-3 left-4 flex size-[18px] items-center justify-center rounded-full border border-[#ccc] bg-[#4a4f4d] text-[11px] font-semibold text-white">17</span></span> },
  { name: 'Vortex', icon: <span className="flex items-end text-lg leading-5 font-black text-white">V<span className="text-[9px] leading-3 text-[#c22]">.x</span></span> },
  { name: 'Illustrator', icon: <AppTile text="Ai" className="bg-[#330000] text-[#ff9a00]" /> },
  { name: 'Audacity', icon: <Art><path d="M6 10l2 3 2-4 2 4 2-4 2 4 2-3v11H6z" fill="#ff9c1a" /><path d="M6 15l2-1 2 2 2-2 2 2 2-2 2 1v2H6z" fill="#e23" /><path d="M3 14C2 0 22 0 21 14" fill="none" stroke="#1414c8" strokeWidth="2.500" /><path d="M0 12l6-1v12c-4 0-6-4-6-11zM24 12l-6-1v12c4 0 6-4 6-11z" fill="#1414c8" /></Art> },
  { name: 'Cocktail', icon: <Art><path d="M1 9h10l-4 6v6h3v2H4v-2h2v-6z" fill="#e8d9d0" /><path d="M2 10h8l-4 5z" fill="#e0362c" /><path d="M3 6l4-5 2 4 3-1-3 5z" fill="#b4d33a" /><ellipse cx="17" cy="16" rx="5" ry="7" fill="#c98a1c" /><path d="M17 10l-5-5 4 1 0-6 2 4 4-3-1 5 3-1z" fill="#35832c" /><path d="M13 13l8 6M13 18l7-7" stroke="#7c4f10" /></Art> },
  { name: 'Premiere', icon: <AppTile text="Pr" className="bg-[#00005b] text-[#9999ff]" /> },
  { name: 'Premiere Beta', icon: <AppTile text="Pr" className="bg-[#eef4fa] text-[#1473c8]" /> },
  { name: 'Photoshop', open: true, active: true, icon: <AppTile text="Ps" className="bg-[#f2f4f5] text-[#2684d9]" /> },
  { name: 'After Effects', icon: <AppTile text="Ae" className="bg-[#00005b] text-[#9999ff]" /> },
  { name: 'VI', icon: <span className="font-['Liberation_Sans',sans-serif] text-xl text-[#7a2c12]">VI</span> },
  { name: 'Minecraft', icon: <Art><path d="M0 0h24v24H0z" fill="#54a83a" /><path d="M5 5h5v5H5zM14 5h5v5h-5zM10 10h4v3h2v7h-2.500v-3h-3v3H8v-7h2z" fill="#111" /></Art> },
  { name: 'Word', icon: <Office letter="W" dark="#185abd" mid="#1d63c4" light="#2b7cd3" top="#41a5ee" /> },
  { name: 'Excel', icon: <Office letter="X" dark="#107c41" mid="#17864a" light="#21a366" top="#33c481" /> },
  { name: 'Chameleon', icon: <Art><path d="M1 12C1 4 8 1 14 3c4-3 7 0 9 4l1 4-6 1-3-1-3 4-6-3-2 5z" fill="#8cae2e" /><path d="M8 10a6 6 0 1 1-5.500 5" fill="none" stroke="#f2b71b" strokeWidth="3" /><path d="M9 13c5 0 4 7-1 6-3-1-2-5 1-4" fill="none" stroke="#c22a14" strokeWidth="2.200" /><circle cx="18" cy="6" r="1.200" fill="#111" /></Art> },
  { name: 'Media Encoder', icon: <AppTile text="Me" className="bg-[#00005b] text-[#9999ff]" /> },
  { name: 'Creative Cloud', open: true, icon: <span className="flex size-[22px] items-center justify-center rounded-sm bg-[conic-gradient(#f9b800,#5bc236,#1e9be9,#8a3ffc,#ea3b8c,#f23a2e,#f9b800)]"><Line box="0 0 16 16" className="size-[18px] text-white"><path d="M5 12.500a3.800 3.800 0 0 1 0-7.500c2 0 3 1 5 3M11 12.500H5M11 12.500a4 4 0 1 0-4-6.500M9 10c-2-2-3-2.500-4-2.500a1.500 1.500 0 0 0 0 3h1M8 8c1-1 2-1.500 3-1a1.800 1.800 0 0 1-1 3.500H9" strokeWidth="1.500" /></Line></span> },
];

const drops = [[372, 20, 4], [485, 16, 6], [520, 27, 3], [545, 18, 5], [575, 20, 8], [640, 22, 3], [682, 20, 3], [742, 22, 8], [812, 22, 7], [690, 6, 3], [766, 5, 3], [918, 3, 3], [986, 6, 3], [1100, 18, 6], [1110, 8, 3], [1148, 23, 3], [1202, 25, 7], [1264, 24, 8], [1390, 16, 6], [1464, 20, 5], [1500, 5, 3], [1592, 22, 6], [1644, 18, 6], [1636, 6, 3], [1697, 8, 3], [1794, 26, 6], [1796, 6, 3], [1845, 18, 5], [1860, 34, 3], [2068, 20, 3], [2102, 32, 3], [2255, 22, 2]];

const Grip = () => <span className="h-4 w-[3px] shrink-0 border-x border-[#777]" />;

const Taskbar = () => (
  <footer className="relative flex h-10 shrink-0 items-stretch bg-[linear-gradient(90deg,#111416_0%,#1a1c1d_13%,#2e3032_16%,#403c3d_20%,#2c2e30_26%,#4e4f53_31%,#5f5859_34%,#4e4f53_38%,#77787c_42%,#808084_49%,#8b8b8f_54%,#8e8d90_57%,#666_59%,#3d3536_61%,#2e2022_63%,#57302f_66%,#3a2425_68%,#1d1e20_70%,#191c1e_76%,#14181a_82%,#212325_85%,#131718_88%,#121618_100%)] text-white">
    <svg className="absolute inset-0 size-full" aria-hidden="true">
      {drops.map(([x, y, r]) => <ellipse key={x} cx={x} cy={y} rx={r / 2 + 1} ry={r} fill="#111" fillOpacity=".3" stroke="#aaa" strokeOpacity=".2" />)}
    </svg>
    <button aria-label="Start" className="relative flex w-12 items-center justify-center"><Solid><path d="M0 2.300l6.500-.9v6.200H0zM7.300 1.300L16 0v7.600H7.300zM0 8.400h6.500v6.200L0 13.700zM7.300 8.400H16V16l-8.700-1.300z" /></Solid></button>
    <div className="relative w-72">
      <input aria-label="Search" placeholder="Type here to search" className="size-full border border-[#5c5c5c] bg-[#333] pl-[39px] text-sm placeholder:text-[#d0d0d0]" />
      <Line className="pointer-events-none absolute top-3 left-3 size-4"><circle cx="10" cy="6" r="5.300" /><path d="M6 10l-5.500 5.500" /></Line>
    </div>
    <button aria-label="Task View" className="relative flex w-12 items-center justify-center"><Line><path d="M1 0v3h9V0M1 5h9v6H1zM1 16v-3h9v3M13.500 0v16" /><path d="M12.500 5h2v2.500h-2z" fill="currentColor" /></Line></button>
    <div className="relative flex w-[479px] items-center pr-[13px] pl-[6px]">
      <Grip />
      <span className="ml-[11px] flex-1 text-[11px]">TB</span>
      <Grip />
    </div>
    {apps.map((a) => (
      <button key={a.name} aria-label={a.name} className={`relative flex w-[49px] shrink-0 items-center justify-center ${a.active ? 'bg-white/20' : ''}`}>
        {a.icon}
        {a.open && <span className={`absolute bottom-0 h-[2px] bg-[#76b9ed] ${a.active ? 'w-full' : 'w-10'}`} />}
      </button>
    ))}
    <div className="relative ml-auto flex items-center pr-[14px]">
      <ChevronUp className="size-4" />
      <Line className="ml-[9px] h-4 w-3" box="0 0 12 16"><path d="M1 5h7v6H1zM8 7l3-2v6L8 9M2 2.500c2-2 5-2 7 0M2 13.500c2 2 5 2 7 0" /></Line>
      <Line className="ml-[9px] size-4"><path d="M4 3h11.300v8H4M9.500 11v3M6 14h7M1 1h4v5H1zM3 6v5" /></Line>
      <Line className="ml-2 h-[14px] w-[17px]" box="0 0 17 14"><path d="M1 5h2.500L7 1.500v11L3.500 9H1zM9 5c1 1.300 1 2.700 0 4M11.500 3c2 2.500 2 5.500 0 8M14 1c3 4 3 8 0 12" /></Line>
      <div className="ml-2 text-center text-[11px] leading-[18px]">ENG<br />PTB</div>
      <div className="ml-3 text-center text-[11px] leading-[18px] whitespace-nowrap">4:49 PM<br />1/24/2025</div>
      <button aria-label="Notifications" className="relative ml-[17px]">
        <Solid className="h-[15px] w-4" box="0 0 16 15"><path d="M0 0h16v12H7l-3 3v-3H0z" /><path d="M3 3.500h10M3 6h10M3 8.500h7" stroke="#222" /></Solid>
        <span className="absolute top-[7px] left-[6px] flex size-[18px] items-center justify-center rounded-full border border-[#888] bg-[#333] text-[11px] font-semibold">13</span>
      </button>
      <div className="w-[10px]" />
    </div>
  </footer>
);

export default function App() {
  return (
    <div className="relative flex h-screen w-full flex-col overflow-hidden bg-[#535353] font-['Noto_Sans','Open_Sans',sans-serif]">
      <MenuBar />
      <OptionsBar />
      <div className="flex min-h-0 flex-1">
        <Toolbar />
        <Workspace />
        <RightDock />
      </div>
      <Taskbar />
      <ErrorDialog />
    </div>
  );
}
